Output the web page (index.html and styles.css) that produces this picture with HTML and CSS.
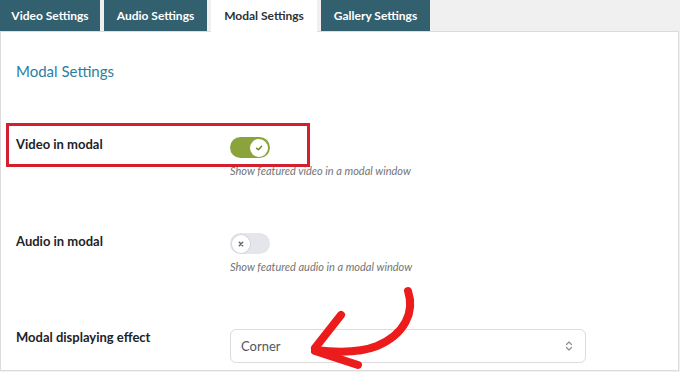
FILE: index.html
```html
<!DOCTYPE html>
<html>
<head>
<meta charset="utf-8">
<link rel="stylesheet" href="styles.css">
</head>
<body>
<div class="page">
  <nav class="tabs">
    <div class="tab">Video Settings</div>
    <div class="tab">Audio Settings</div>
    <div class="tab active">Modal Settings</div>
    <div class="tab">Gallery Settings</div>
  </nav>
  <section class="panel">
    <h2 class="heading">Modal Settings</h2>

    <div class="row first">
      <div class="label">Video in modal</div>
      <div class="control">
        <div class="toggle on">
          <span class="knob">
            <svg viewBox="0 0 10 10" width="10" height="10"><path d="M2.6 5.2 L4.3 6.8 L7.4 3.4" fill="none" stroke="#6e8526" stroke-width="1.5" stroke-linecap="round" stroke-linejoin="round"/></svg>
          </span>
        </div>
        <div class="desc">Show featured video in a modal window</div>
      </div>
    </div>

    <div class="row second">
      <div class="label">Audio in modal</div>
      <div class="control">
        <div class="toggle off">
          <span class="knob">
            <svg viewBox="0 0 10 10" width="10" height="10"><path d="M3.3 3.3 L6.7 6.7 M6.7 3.3 L3.3 6.7" fill="none" stroke="#5f6470" stroke-width="1.4" stroke-linecap="round"/></svg>
          </span>
        </div>
        <div class="desc">Show featured audio in a modal window</div>
      </div>
    </div>

    <div class="row third">
      <div class="label">Modal displaying effect</div>
      <div class="control">
        <div class="select">
          <span>Corner</span>
          <svg class="chev" viewBox="0 0 8 12" width="8" height="12"><path d="M1.5 4.5 L4 2 L6.5 4.5 M1.5 7.5 L4 10 L6.5 7.5" fill="none" stroke="#8c8f94" stroke-width="1.2" stroke-linecap="round" stroke-linejoin="round"/></svg>
        </div>
      </div>
    </div>
  </section>

  <div class="highlight"></div>
  <svg class="arrow" viewBox="0 0 680 372" width="680" height="372">
    <path d="M408 291 C 415 312, 405 334, 377 346 C 357 354, 332 352, 315 350" fill="none" stroke="#ec1c1c" stroke-width="8" stroke-linecap="round"/>
    <path d="M341 315 L 315 348" fill="none" stroke="#ec1c1c" stroke-width="8" stroke-linecap="round"/>
    <path d="M315 351 L 358 365" fill="none" stroke="#ec1c1c" stroke-width="8" stroke-linecap="round"/>
  </svg>
</div>
</body>
</html>
```

FILE: styles.css
```css
* { box-sizing: border-box; }
html, body { margin: 0; padding: 0; }
body {
  background: #f0f0f1;
  font-family: Lato, "Open Sans", sans-serif;
  width: 680px;
  height: 372px;
  overflow: hidden;
}
.page {
  position: relative;
  width: 680px;
  height: 372px;
}
.tabs {
  display: flex;
  gap: 4px;
  height: 31px;
  position: relative;
  z-index: 1;
}
.tab {
  background: #33606f;
  color: #ffffff;
  font-weight: 700;
  font-size: 12px;
  line-height: 31px;
  padding: 0;
  text-align: center;
  white-space: nowrap;
}
.tab:nth-child(1) { width: 100px; }
.tab:nth-child(2) { width: 103px; }
.tab:nth-child(3) { width: 106px; }
.tab:nth-child(4) { width: 109px; }
.tab.active {
  background: #ffffff;
  color: #2c3338;
  height: 32px;
}
.panel {
  background: #ffffff;
  border: 1px solid #dcdcde;
  width: 679px;
  height: 340px;
  padding: 0 0 0 15px;
  display: flex;
  flex-direction: column;
}
.heading {
  margin: 29px 0 0 0;
  font-size: 15px;
  line-height: 20px;
  font-weight: 400;
  color: #2b7ea1;
}
.row {
  display: grid;
  grid-template-columns: 214px 356px;
}
.row.first { margin-top: 53px; }
.row.second { margin-top: 52px; }
.row.third { margin-top: 52px; }
.label {
  font-size: 13px;
  line-height: 20px;
  font-weight: 700;
  color: #1d2327;
}
.control {
  display: flex;
  flex-direction: column;
  align-items: flex-start;
}
.toggle {
  width: 40px;
  height: 21px;
  border-radius: 11px;
  margin-top: 3px;
  display: flex;
  align-items: center;
  padding: 0 2px;
}
.toggle.on {
  background: #8aa33b;
  justify-content: flex-end;
}
.toggle.off {
  background: #e4e6eb;
  justify-content: flex-start;
  margin-top: 2px;
}
.knob {
  width: 18px;
  height: 18px;
  border-radius: 50%;
  background: #ffffff;
  display: flex;
  align-items: center;
  justify-content: center;
}
.toggle.off .knob {
  box-shadow: 0 0 0 1px #d4d6dc;
}
.desc {
  margin-top: 5px;
  font-size: 11px;
  line-height: 16px;
  font-style: italic;
  color: #757575;
}
.select {
  margin-top: 2px;
  width: 356px;
  height: 34px;
  border: 1px solid #dcdcde;
  border-radius: 6px;
  display: flex;
  align-items: center;
  justify-content: space-between;
  padding: 0 11px 0 10px;
  font-size: 13px;
  color: #50575e;
}
.chev { margin-right: 1px; }
.highlight {
  position: absolute;
  left: 6px;
  top: 123px;
  width: 304px;
  height: 44px;
  border: 3px solid #d3202e;
}
.arrow {
  position: absolute;
  left: 0;
  top: 0;
  pointer-events: none;
}
```
